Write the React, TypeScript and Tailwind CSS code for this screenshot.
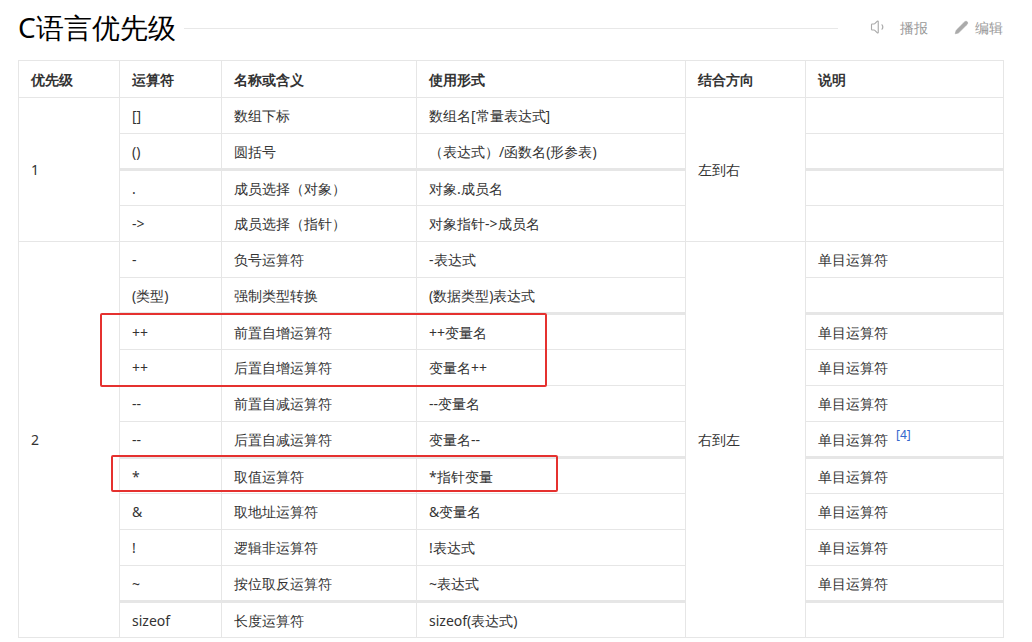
import { Volume1, Pencil } from "lucide-react";

type Row = { p?: [string, number]; op: string; name: string; form: string; dir?: [string, number]; note: string; sup?: string; thick?: boolean };

const rows: Row[] = [
  { p: ["1", 4], op: "[]", name: "数组下标", form: "数组名[常量表达式]", dir: ["左到右", 4], note: "" },
  { op: "()", name: "圆括号", form: "（表达式）/函数名(形参表)", note: "", thick: true },
  { op: ".", name: "成员选择（对象）", form: "对象.成员名", note: "" },
  { op: "->", name: "成员选择（指针）", form: "对象指针->成员名", note: "" },
  { p: ["2", 11], op: "-", name: "负号运算符", form: "-表达式", dir: ["右到左", 11], note: "单目运算符" },
  { op: "(类型)", name: "强制类型转换", form: "(数据类型)表达式", note: "", thick: true },
  { op: "++", name: "前置自增运算符", form: "++变量名", note: "单目运算符" },
  { op: "++", name: "后置自增运算符", form: "变量名++", note: "单目运算符" },
  { op: "--", name: "前置自减运算符", form: "--变量名", note: "单目运算符" },
  { op: "--", name: "后置自减运算符", form: "变量名--", note: "单目运算符", sup: "[4]", thick: true },
  { op: "*", name: "取值运算符", form: "*指针变量", note: "单目运算符" },
  { op: "&", name: "取地址运算符", form: "&变量名", note: "单目运算符" },
  { op: "!", name: "逻辑非运算符", form: "!表达式", note: "单目运算符" },
  { op: "~", name: "按位取反运算符", form: "~表达式", note: "单目运算符", thick: true },
  { op: "sizeof", name: "长度运算符", form: "sizeof(表达式)", note: "" },
];

const td = "border border-[#e6e6e6] px-3 align-middle";

export default function App() {
  return (
    <div className="relative w-[1032px] h-[642px] overflow-hidden bg-white text-[#333] font-['Liberation_Sans','Noto_Sans_CJK_SC',sans-serif]">
      <div className="flex items-center h-[54px] pl-[18px] pr-[29px]">
        <h1 className="text-[28px] leading-none text-black">C语言优先级</h1>
        <div className="flex-1 h-px bg-[#e8e8e8] ml-[8px] mr-[32px] mt-[2px]" />
        <div className="flex items-center gap-[6px] text-[14px] text-[#999]">
          <Volume1 size={18} strokeWidth={1.5} className="text-[#aaa]" />
          <span className="mr-[20px] ml-[6px]">播报</span>
          <Pencil size={15} fill="#aaa" strokeWidth={1} className="text-[#aaa]" />
          <span>编辑</span>
        </div>
      </div>
      <table className="ml-[18px] mt-[6px] border-collapse table-fixed text-[14px]" style={{ width: 985 }}>
        <colgroup>
          <col style={{ width: 101 }} />
          <col style={{ width: 102 }} />
          <col style={{ width: 195 }} />
          <col style={{ width: 269 }} />
          <col style={{ width: 120 }} />
          <col style={{ width: 198 }} />
        </colgroup>
        <thead>
          <tr className="h-[37px] font-bold text-left">
            {["优先级", "运算符", "名称或含义", "使用形式", "结合方向", "说明"].map((h) => (
              <th key={h} className={td}>{h}</th>
            ))}
          </tr>
        </thead>
        <tbody>
          {rows.map((r, i) => {
            const b = r.thick ? "border-b-[3px]" : "";
            return (
              <tr key={i} className="h-[36px]">
                {r.p && <td rowSpan={r.p[1]} className={td}>{r.p[0]}</td>}
                <td className={`${td} ${b}`}>{r.op}</td>
                <td className={`${td} ${b}`}>{r.name}</td>
                <td className={`${td} ${b}`}>{r.form}</td>
                {r.dir && <td rowSpan={r.dir[1]} className={td}>{r.dir[0]}</td>}
                <td className={`${td} ${b}`}>
                  {r.note}
                  {r.sup && <sup className="ml-[8px] text-[#3366cc] text-[12px]">{r.sup}</sup>}
                </td>
              </tr>
            );
          })}
        </tbody>
      </table>
      <div className="absolute left-[100px] top-[313px] w-[447px] h-[74px] border-2 border-[#e5312f] rounded-[2px]" />
      <div className="absolute left-[111px] top-[455px] w-[447px] h-[37px] border-2 border-[#e5312f] rounded-[2px]" />
    </div>
  );
}
